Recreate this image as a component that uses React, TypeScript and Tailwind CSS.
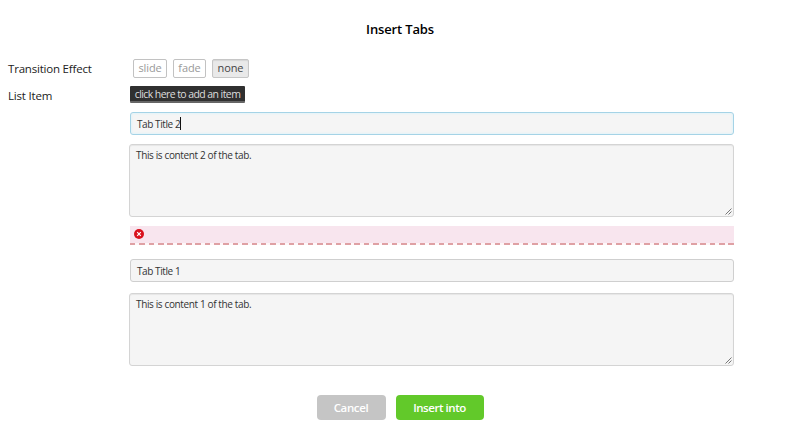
import React from "react";

const effects = [
  { name: "slide", style: "w-[34px] mr-[6px] bg-white border-[#c2c2c2] text-[#999]" },
  { name: "fade", style: "w-[33px] mr-[6px] bg-white border-[#c2c2c2] text-[#999]" },
  { name: "none", style: "w-[37px] bg-[#e9e9e9] border-[#c6c6c6] text-[#444] shadow-[inset_0_1px_1px_#d5d5d5]" },
];

function TitleField({ text, focused = false }: { text: string; focused?: boolean }) {
  return (
    <div
      className={
        "ml-px flex h-[23px] w-[604px] items-center rounded-[3px] border bg-[#f5f5f5] pl-[6px] " +
        (focused
          ? "border-[#a5d3e6] shadow-[inset_0_0_2px_1px_#e3f3f8]"
          : "border-[#cfcfcf]")
      }
    >
      <span className="text-[10px] leading-[14px] tracking-[-0.42px] text-[#333]">{text}</span>
      {focused && <span className="h-[13px] w-px bg-[#111]" />}
    </div>
  );
}

function ContentField({ text }: { text: string }) {
  return (
    <div className="flex h-[73px] w-[605px] justify-between rounded-[3px] border border-[#d4d4d4] bg-[#f5f5f5] pl-[6px] shadow-[inset_0_1px_1px_#e6e6e6]">
      <span className="pt-[3px] text-[10px] leading-[14px] tracking-[-0.37px] text-[#333]">{text}</span>
      <svg className="mr-px mb-px self-end" width="7" height="7" viewBox="0 0 7 7" fill="none" stroke="#777" strokeWidth="1">
        <path d="M0.5 6.5 6.5 0.5M3.5 6.5 6.5 3.5" />
      </svg>
    </div>
  );
}

export default function App() {
  return (
    <div className="h-[428px] w-[800px] overflow-hidden bg-white font-['Open_Sans',sans-serif]">
      <h1 className="pt-[20px] text-center text-[13px] leading-[18px] font-semibold tracking-[-0.15px] text-black">Insert Tabs</h1>

      <div className="mt-[20px] flex h-[20px] items-center pl-[8px]">
        <div className="w-[125px] pt-px text-[11.5px] leading-[20px] tracking-[-0.2px] text-[#222]">Transition Effect</div>
        {effects.map((e) => (
          <button
            key={e.name}
            className={"h-[19px] rounded-[2px] border text-[11px] leading-[16px] tracking-[-0.1px] " + e.style}
          >
            {e.name}
          </button>
        ))}
      </div>

      <div className="mt-[8px] flex pl-[8px]">
        <div className="w-[121px] pt-px text-[11.5px] leading-[17px] tracking-[-0.2px] text-[#222]">List Item</div>
        <div>
          <button className="ml-px block h-[17px] w-[115px] rounded-[1px] border-b-2 border-[#666] bg-[#303030] text-[10.5px] leading-[14px] tracking-[-0.58px] whitespace-nowrap text-[#ddd]">
            click here to add an item
          </button>
          <div className="mt-[9px]">
            <TitleField text="Tab Title 2" focused />
          </div>
          <div className="mt-[9px]">
            <ContentField text="This is content 2 of the tab." />
          </div>
          <div className="mt-[9px] ml-px h-[18px] w-[604px] bg-[#f8e5ee]">
            <div className="flex h-[17px] items-center pl-[4px]">
              <svg width="10" height="10" viewBox="0 0 10 10" className="-mt-px">
                <circle cx="5" cy="5" r="5" fill="#d9101c" />
                <path d="M3.2 3.2 6.8 6.8M6.8 3.2 3.2 6.8" stroke="#fff" strokeWidth="1.2" />
              </svg>
            </div>
            <div className="h-[1.5px] bg-[repeating-linear-gradient(90deg,#dfa0a4_0_5.5px,#fdf6f8_5.5px_9.35px)]" />
          </div>
          <div className="mt-[15px]">
            <TitleField text="Tab Title 1" />
          </div>
          <div className="mt-[11px]">
            <ContentField text="This is content 1 of the tab." />
          </div>
        </div>
      </div>

      <div className="mt-[29px] flex justify-center gap-[10px] text-[11.5px] leading-[25px] font-semibold text-white">
        <button className="h-[25px] w-[69px] rounded-[4px] bg-[#c5c5c5] tracking-[-0.35px]">Cancel</button>
        <button className="h-[25px] w-[88px] rounded-[4px] bg-[#62c92a] tracking-[-0.45px]">Insert into</button>
      </div>
    </div>
  );
}
